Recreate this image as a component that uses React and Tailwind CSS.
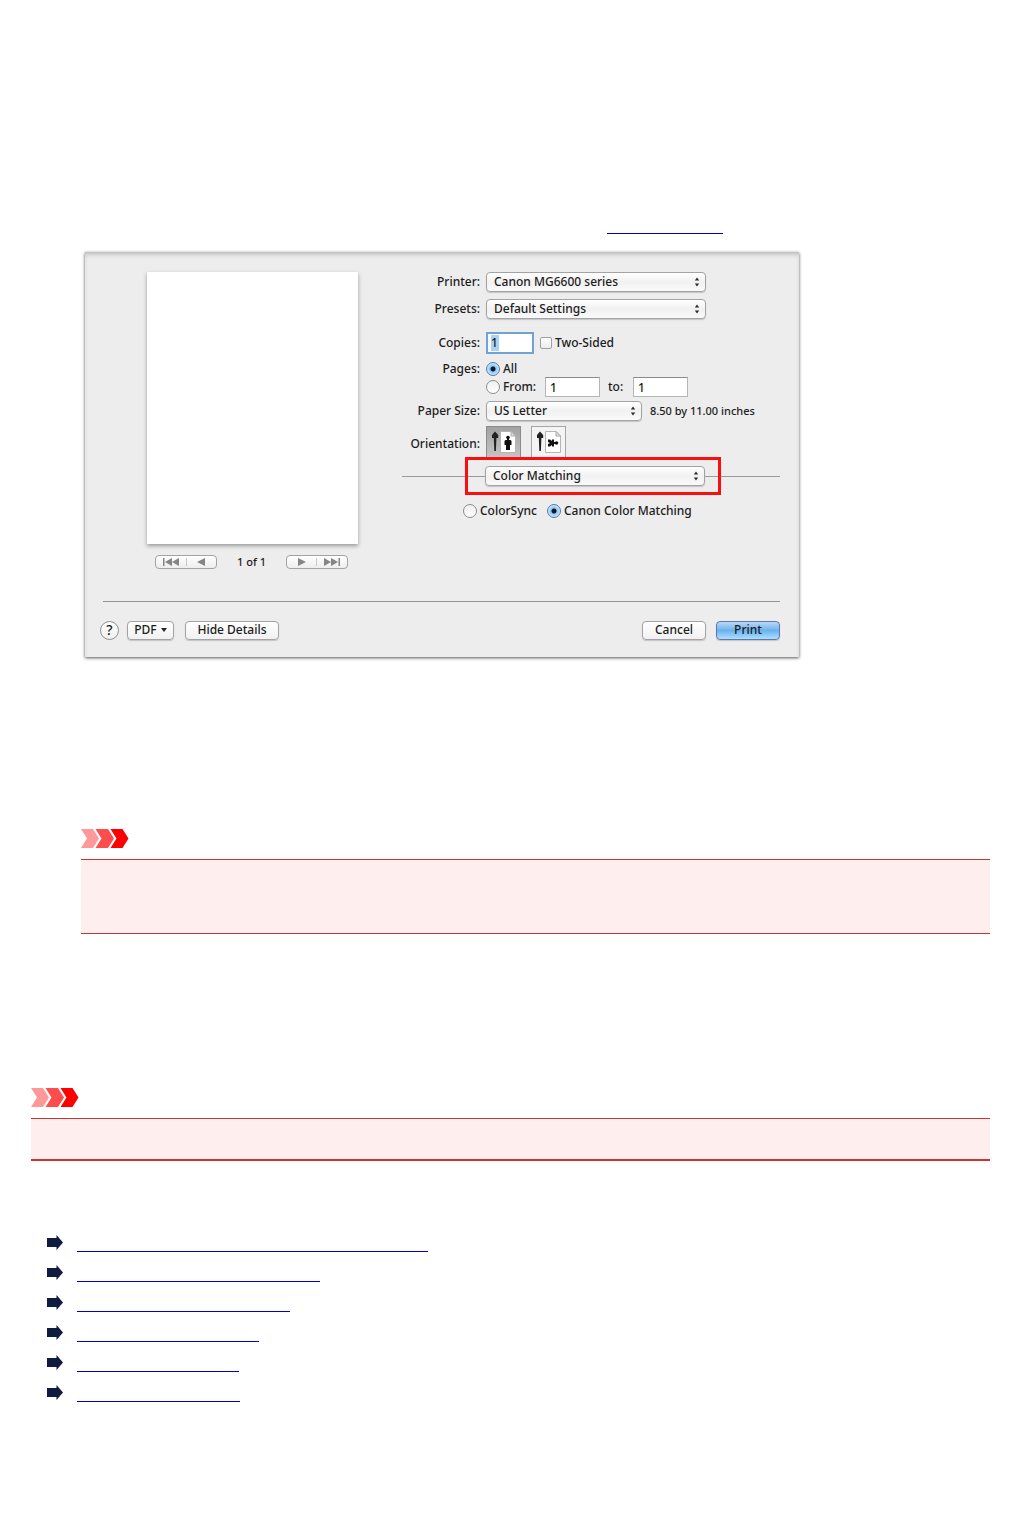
import clsx from "clsx";

const relatedLinks = [
  { label: "Related topic 1", width: "w-[351px]" },
  { label: "Related topic 2", width: "w-[243px]" },
  { label: "Related topic 3", width: "w-[213px]" },
  { label: "Related topic 4", width: "w-[182px]" },
  { label: "Related topic 5", width: "w-[162px]" },
  { label: "Related topic 6", width: "w-[163px]" },
];

function Popup({ id, label, value, className }) {
  return (
    <div className={clsx("relative h-5 shrink-0", className)}>
      <select
        id={id}
        aria-label={label}
        className="h-5 w-full appearance-none rounded border border-[#a3a3a3] bg-linear-to-b from-white via-[#f1f1f1] to-[#fafafa] pr-5 pl-[7px] leading-4 shadow-[0_1px_1px_#c4c4c4]"
      >
        <option>{value}</option>
      </select>
      <svg
        viewBox="0 0 6 10"
        className="pointer-events-none absolute top-[5px] right-[6px] h-[10px] w-[6px] fill-[#2c2c2c]"
      >
        <path d="M3 0.5 5.2 3.6H0.8ZM3 9.5 0.8 6.4H5.2Z" />
      </svg>
    </div>
  );
}

function Radio({ id, name, label, checked }) {
  return (
    <label className="flex items-center gap-[3px]">
      <input
        id={id}
        type="radio"
        name={name}
        defaultChecked={checked}
        className="size-[14px] shrink-0 appearance-none rounded-full border border-[#8c8c8c] bg-linear-to-b from-[#f0f0f0] to-white checked:border-[#5679a5] checked:bg-[radial-gradient(circle,#0b1a30_0_2px,#8fc6f3_3px,#c5e8ff_6px)]"
      />
      {label}
    </label>
  );
}

function Row({ label, htmlFor, className, children }) {
  return (
    <div className={clsx("flex items-center gap-1.5", className)}>
      <label
        htmlFor={htmlFor}
        className="flex w-[78px] shrink-0 justify-end whitespace-nowrap"
      >
        {label}
      </label>
      {children}
    </div>
  );
}

function PushButton({ className, children }) {
  return (
    <button
      type="button"
      className={clsx(
        "flex h-[19px] items-center justify-center rounded border shadow-[0_1px_1px_#c4c4c4]",
        className
      )}
    >
      {children}
    </button>
  );
}

function PageIcon({ landscape }) {
  return (
    <svg viewBox="0 0 26 24" className="h-6 w-[26px]">
      <path d="M4 1.5 7.2 5V8H5.4L4.9 21H3.3L2.8 8H1V5Z" fill="#222" />
      <path d="M9.5 1.5H20L24.5 6V22.5H9.5Z" fill="#fff" stroke="#b5b5b5" />
      <path d="M20 1.5V6H24.5Z" fill="#e4e4e4" stroke="#aaa" />
      {landscape ? (
        <g fill="#111">
          <circle cx="20.5" cy="13" r="1.8" />
          <path d="M12 9.5H14L16 11V9.5H18V16.5H16V15L14 16.5H12V14L14 13 12 12Z" />
          <path d="M17 12H20V14H17Z" />
        </g>
      ) : (
        <g fill="#111">
          <circle cx="17" cy="7.5" r="1.8" />
          <path d="M14.5 10H19.5L20.5 11V15H19V20H15V15H13.5V11Z" />
          <path d="M16 8H18V11H16Z" />
        </g>
      )}
    </svg>
  );
}

function Pager({ forward }) {
  return (
    <div
      className={clsx(
        "flex h-[14px] w-[62px] items-center rounded border border-[#a3a3a3] bg-linear-to-b from-white to-[#ededed]",
        forward && "flex-row-reverse"
      )}
    >
      <button
        type="button"
        aria-label={forward ? "Last page" : "First page"}
        className="flex flex-1 justify-center"
      >
        <svg
          viewBox="0 0 16 8"
          className={clsx("h-2 w-4 fill-[#858585]", forward && "rotate-180")}
        >
          <path d="M0 0H1.5V8H0ZM9 0V8L2 4ZM16 0V8L9 4Z" />
        </svg>
      </button>
      <span className="h-2 w-px bg-[#c8c8c8]" />
      <button
        type="button"
        aria-label={forward ? "Next page" : "Previous page"}
        className="flex flex-1 justify-center"
      >
        <svg
          viewBox="0 0 8 8"
          className={clsx("size-2 fill-[#858585]", forward && "rotate-180")}
        >
          <path d="M8 0V8L0 4Z" />
        </svg>
      </button>
    </div>
  );
}

function PrintDialog() {
  return (
    <form className="w-[714px] bg-[#ededed] pt-5 pr-[19px] pb-[17px] pl-[15px] font-['Noto_Sans','Open_Sans',sans-serif] text-xs leading-4 font-medium text-[#1c1c1c] shadow-[0_1px_3px_#555,inset_0_4px_5px_-2px_#b5b5b5]">
      <div className="flex h-[329px] justify-between">
        {/* Preview */}
        <div className="ml-[47px] w-[211px]">
          <div className="h-[272px] bg-white shadow-[0_2px_4px_#999]" />
          <div className="mt-[10px] flex items-center justify-between pr-2.5 pl-2 text-[11px]">
            <Pager />
            <span>1 of 1</span>
            <Pager forward />
          </div>
        </div>

        {/* Settings */}
        <div className="w-[378px]">
          <Row label="Printer:" htmlFor="printer">
            <Popup id="printer" value="Canon MG6600 series" className="w-[220px]" />
          </Row>
          <Row label="Presets:" htmlFor="presets" className="mt-[7px]">
            <Popup id="presets" value="Default Settings" className="w-[220px]" />
          </Row>
          <Row label="Copies:" htmlFor="copies" className="mt-3 h-6">
            <div className="flex h-[22px] w-12 shrink-0 items-center border-2 border-[#6fa3d3] bg-white">
              <input
                id="copies"
                defaultValue="1"
                className="ml-[3px] h-4 w-2 bg-[#a9d2f7] outline-none"
              />
            </div>
            <label className="flex items-center gap-[3px]">
              <input
                type="checkbox"
                className="size-[12px] appearance-none rounded-xs border border-[#a0a0a0] bg-linear-to-b from-white to-[#ececec]"
              />
              Two-Sided
            </label>
          </Row>
          <Row label="Pages:" htmlFor="pages-all" className="mt-1.5 h-4">
            <Radio id="pages-all" name="pages" label="All" checked />
          </Row>
          <div className="flex h-5 items-center pl-[84px]">
            <div className="w-[59px]">
              <Radio name="pages" label="From:" />
            </div>
            <input
              aria-label="From page"
              defaultValue="1"
              className="h-5 w-[55px] border border-[#b5b5b5] border-t-[#8a8a8a] bg-white px-1"
            />
            <label htmlFor="to-page" className="w-[33px] pl-2">
              to:
            </label>
            <input
              id="to-page"
              defaultValue="1"
              className="h-5 w-[55px] border border-[#b5b5b5] border-t-[#8a8a8a] bg-white px-1"
            />
          </div>
          <Row label="Paper Size:" htmlFor="paper" className="mt-1">
            <Popup id="paper" value="US Letter" className="w-[156px]" />
            <span className="pl-0.5 text-[11px] whitespace-nowrap">
              8.50 by 11.00 inches
            </span>
          </Row>
          <div className="mt-[5px] flex h-[31px] items-center gap-1.5">
            <span className="w-[78px] shrink-0 pt-1 text-right">
              Orientation:
            </span>
            <button
              type="button"
              aria-label="Portrait"
              className="flex h-[31px] w-[35px] items-center justify-center border border-b-0 border-[#8b8b8b] bg-linear-to-b from-[#a2a2a2] to-[#c4c4c4]"
            >
              <PageIcon />
            </button>
            <button
              type="button"
              aria-label="Landscape"
              className="ml-1 flex h-[31px] w-[35px] items-center justify-center border border-b-0 border-[#a5a5a5] bg-[#f4f4f4]"
            >
              <PageIcon landscape />
            </button>
          </div>
          <div className="flex items-center">
            <div className="h-px flex-1 bg-[#9a9a9a]" />
            <div className="flex h-[38px] w-[256px] items-center border-3 border-[#fc0d10]">
              <div className="h-px flex-1 bg-[#9a9a9a]" />
              <Popup label="Options panel" value="Color Matching" className="w-[220px]" />
              <div className="h-px w-[13px] bg-[#9a9a9a]" />
            </div>
            <div className="h-px w-[59px] bg-[#9a9a9a]" />
          </div>
          <div className="mt-1.5 flex h-5 items-center gap-2.5 pl-[61px]">
            <Radio name="matching" label="ColorSync" />
            <Radio name="matching" label="Canon Color Matching" checked />
          </div>
        </div>
      </div>

      {/* Buttons */}
      <div className="ml-[3px] h-px bg-[#959595]" />
      <div className="mt-[18px] flex h-5 items-center">
        <button
          type="button"
          className="size-[19px] rounded-full border border-[#8f8f8f] bg-linear-to-b from-white to-[#f0f0f0] text-[14px] leading-4"
        >
          ?
        </button>
        <PushButton className="ml-2 w-[47px] gap-1 border-[#a3a3a3] bg-linear-to-b from-white to-[#f1f1f1]">
          PDF
          <svg viewBox="0 0 6 5" className="h-[5px] w-1.5 fill-[#222]">
            <path d="M0 0H6L3 4Z" />
          </svg>
        </PushButton>
        <PushButton className="mr-auto ml-[11px] w-[94px] border-[#a3a3a3] bg-linear-to-b from-white to-[#f1f1f1]">
          Hide Details
        </PushButton>
        <PushButton className="w-16 border-[#a3a3a3] bg-linear-to-b from-white to-[#f1f1f1]">
          Cancel
        </PushButton>
        <PushButton className="ml-2.5 w-16 border-[#6674ab] bg-linear-to-b from-[#b9d9f5] via-[#69b2ee] to-[#a9e0ff]">
          Print
        </PushButton>
      </div>
    </form>
  );
}

function Important({ className }) {
  return (
    <section>
      <svg viewBox="0 0 48 19" className="h-[19px] w-12">
        <path d="M0 0H12L18 9.5 12 19H0L6 9.5Z" fill="#ff9999" />
        <path d="M14.5 0H27L33 9.5 27 19H14.5L20.5 9.5Z" fill="#ff4d4d" />
        <path d="M29.5 0H41.5L47.5 9.5 41.5 19H29.5L35.5 9.5Z" fill="#ff0000" />
      </svg>
      <div
        className={clsx(
          "mt-[11px] border-t border-[#cc3333] bg-[#ffeeee]",
          className
        )}
      />
    </section>
  );
}

function App() {
  return (
    <main className="min-h-screen bg-white px-[31px] pt-[216px] pb-[107px]">
      <div className="pl-[50px]">
        <p className="flex h-[18px] pl-[526px]">
          <a
            href="#dialog"
            aria-label="Print dialog"
            className="w-[116px] border-b border-[#0000cc]"
          />
        </p>
        <div id="dialog" className="mt-[18px] pl-1">
          <PrintDialog />
        </div>
        <div className="mt-[172px]">
          <Important className="h-[75px] border-b" />
        </div>
      </div>
      <div className="mt-[154px]">
        <Important className="h-[43px] border-b-2" />
      </div>
      {/* Related topics */}
      <ul className="mt-[66px] pl-4">
        {relatedLinks.map((link) => (
          <li key={link.label} className="flex h-[30px] items-center gap-3.5">
            <svg viewBox="0 0 16 15" className="h-[15px] w-4 fill-[#0f1c3f]">
              <path d="M0 3H9.5V0L16 7.5 9.5 15V12H0Z" />
            </svg>
            <a
              href="#related"
              aria-label={link.label}
              className={clsx("h-5 border-b border-[#0000cc]", link.width)}
            />
          </li>
        ))}
      </ul>
    </main>
  );
}

export default App;
